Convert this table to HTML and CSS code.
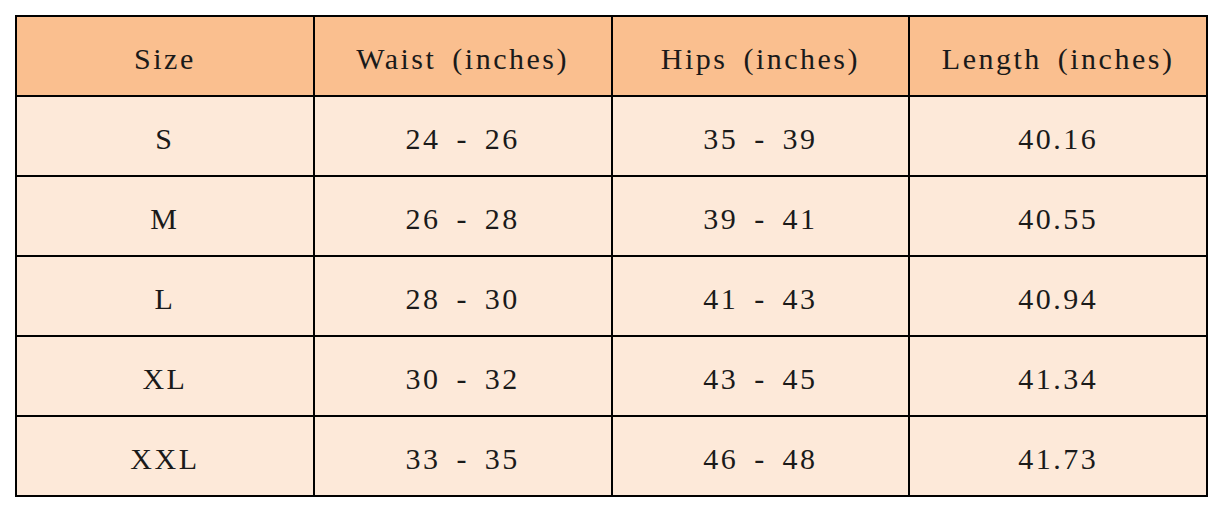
FILE: index.html
```html
<!DOCTYPE html>
<html>
<head>
<meta charset="utf-8">
<link rel="stylesheet" href="styles.css">
</head>
<body>
<div class="size-table">
  <div class="cell head">Size</div>
  <div class="cell head">Waist (inches)</div>
  <div class="cell head">Hips (inches)</div>
  <div class="cell head">Length (inches)</div>

  <div class="cell">S</div>
  <div class="cell">24 - 26</div>
  <div class="cell">35 - 39</div>
  <div class="cell">40.16</div>

  <div class="cell">M</div>
  <div class="cell">26 - 28</div>
  <div class="cell">39 - 41</div>
  <div class="cell">40.55</div>

  <div class="cell">L</div>
  <div class="cell">28 - 30</div>
  <div class="cell">41 - 43</div>
  <div class="cell">40.94</div>

  <div class="cell">XL</div>
  <div class="cell">30 - 32</div>
  <div class="cell">43 - 45</div>
  <div class="cell">41.34</div>

  <div class="cell">XXL</div>
  <div class="cell">33 - 35</div>
  <div class="cell">46 - 48</div>
  <div class="cell">41.73</div>
</div>
</body>
</html>
```
FILE: styles.css
```css
html, body {
  margin: 0;
  padding: 0;
  background: #ffffff;
}
body {
  padding: 15px 0 0 15px;
}
.size-table {
  width: 1193px;
  box-sizing: border-box;
  display: grid;
  grid-template-columns: repeat(4, 1fr);
  grid-auto-rows: 78px;
  gap: 2px;
  padding: 2px;
  background: #000000;
}
.cell {
  display: flex;
  align-items: center;
  justify-content: center;
  padding-top: 6px;
  box-sizing: border-box;
  background: #fde9d9;
  font-family: "Liberation Serif", "Times New Roman", serif;
  font-size: 30px;
  line-height: 1;
  letter-spacing: 2.5px;
  word-spacing: 6px;
  color: #1a1a1a;
  white-space: pre;
}
.cell.head {
  background: #fabf8f;
}
```
